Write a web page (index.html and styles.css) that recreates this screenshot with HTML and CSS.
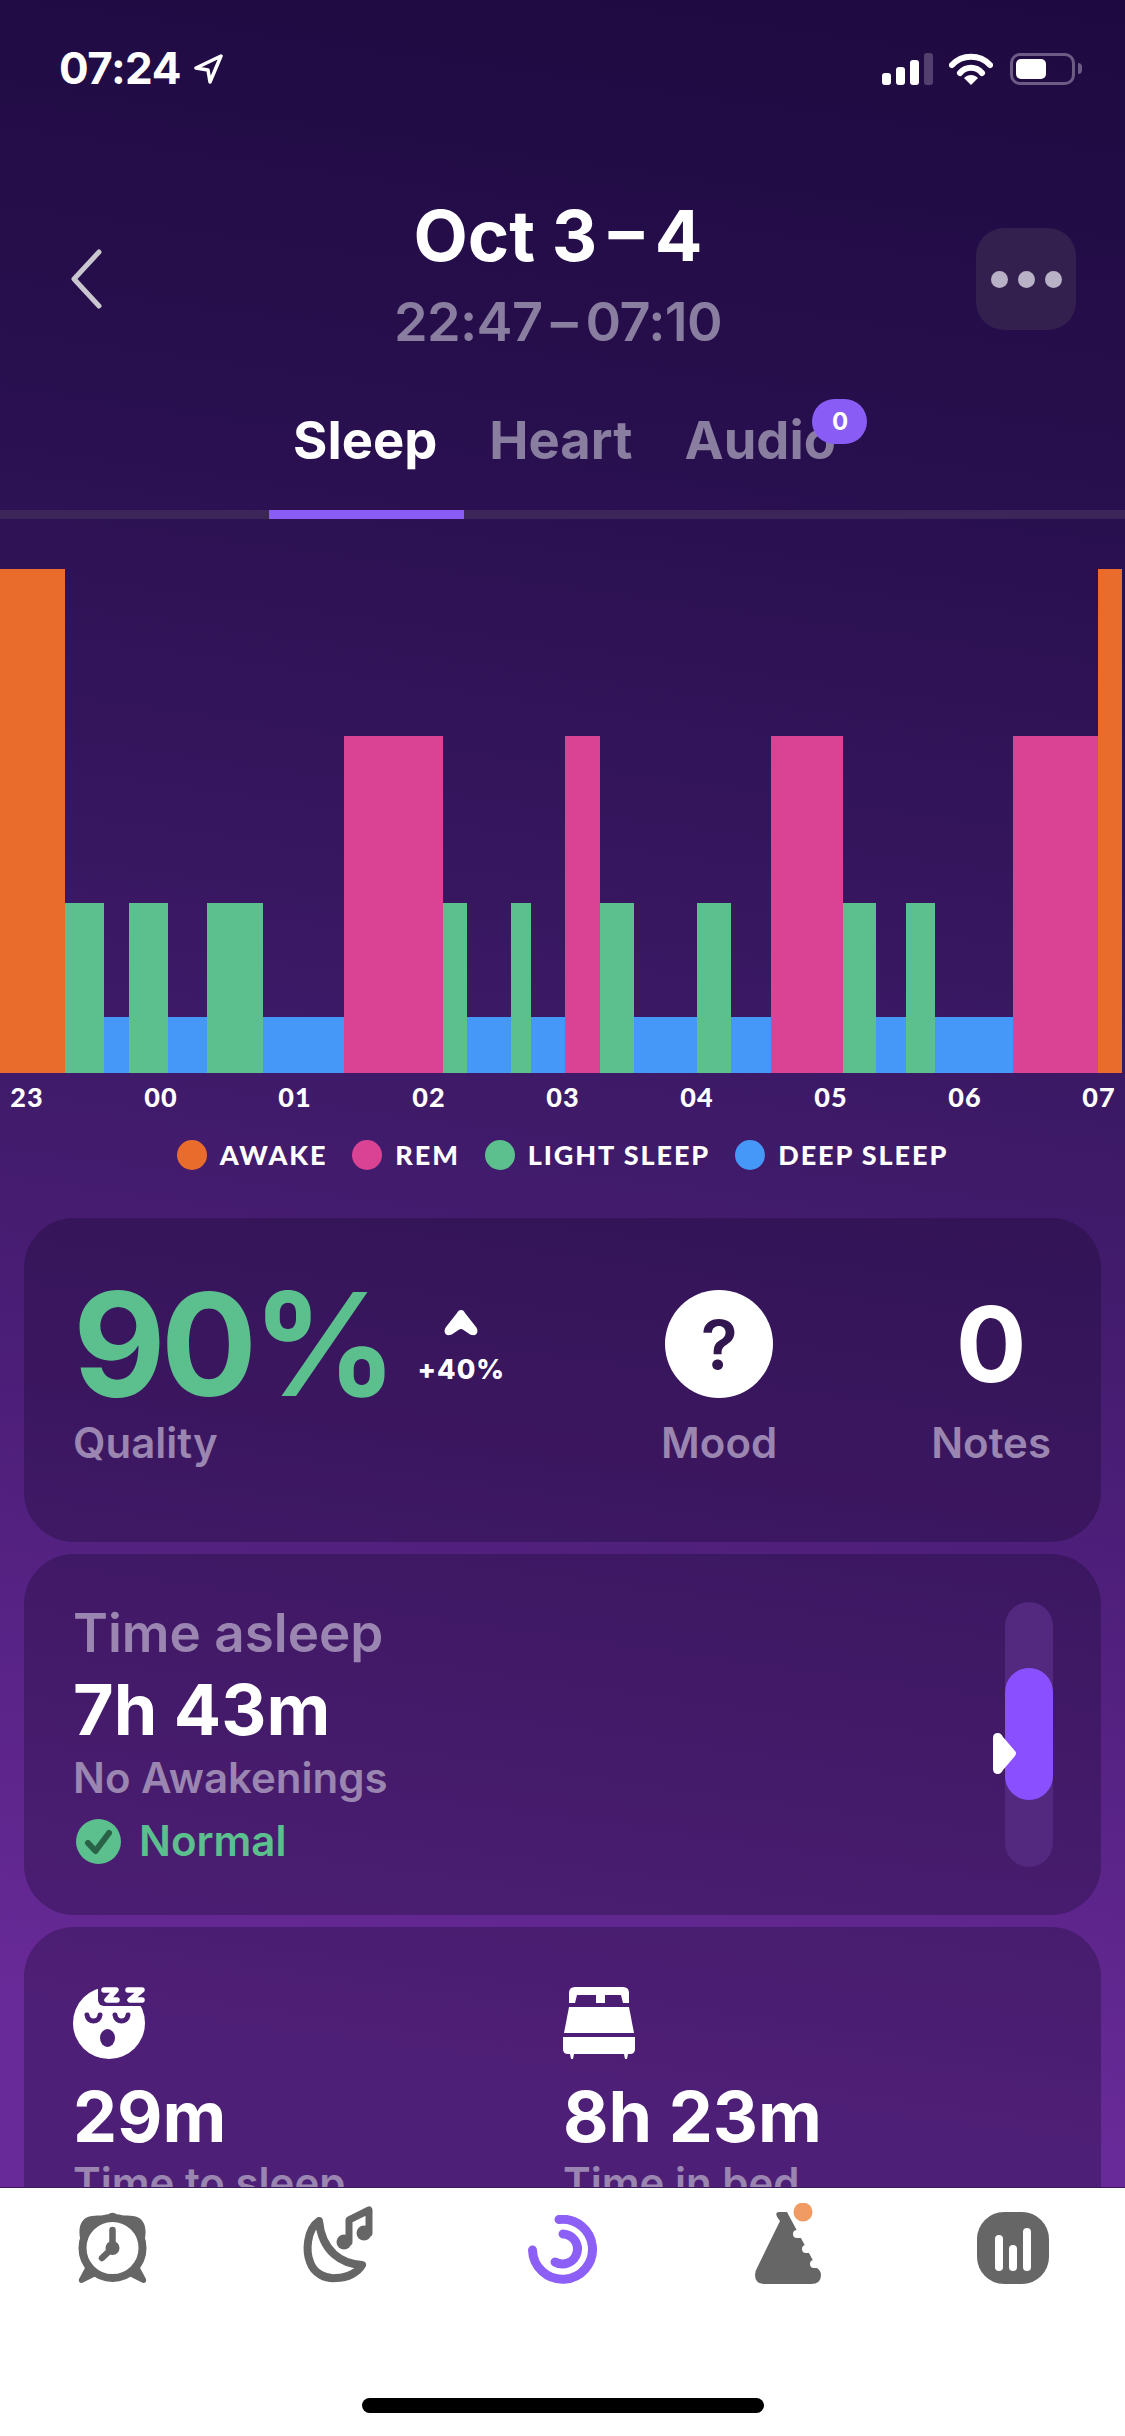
FILE: index.html
```html
<!DOCTYPE html>
<html lang="en">
<head>
    <meta charset="UTF-8">
    <meta name="viewport" content="width=device-width, initial-scale=1.0">
    <title>Sleep report</title>
    <link rel="stylesheet" href="styles.css">
</head>
<body>
    <div class="page">
        <div class="content">
            <div class="status-bar">
                <div class="status-time">
                    <span>07:24</span>
                    <svg class="status-arrow" viewBox="0 0 30 30"><path d="M28 2 L3 14 L15 16 L17 28 Z" fill="none" stroke="#fff" stroke-width="3.5" stroke-linejoin="round"/></svg>
                </div>
                <div class="status-icons">
                    <div class="signal">
                        <span class="signal-bar bar-1"></span>
                        <span class="signal-bar bar-2"></span>
                        <span class="signal-bar bar-3"></span>
                        <span class="signal-bar bar-4"></span>
                    </div>
                    <svg class="wifi" viewBox="0 0 44 32">
                        <path d="M3 12 C13 1 31 1 41 12" fill="none" stroke="#fff" stroke-width="6" stroke-linecap="round"/>
                        <path d="M11 20 C17 13 27 13 33 20" fill="none" stroke="#fff" stroke-width="6" stroke-linecap="round"/>
                        <path d="M15 25 C19 21 25 21 29 25 L22 32 Z" fill="#fff"/>
                    </svg>
                    <div class="battery">
                        <div class="battery-level"></div>
                    </div>
                    <span class="battery-nub"></span>
                </div>
            </div>

            <header class="header">
                <svg class="back" viewBox="0 0 32 60"><path d="M29 3 L4 30 L29 57" fill="none" stroke="#c9c6cf" stroke-width="5" stroke-linecap="round" stroke-linejoin="round"/></svg>
                <div class="titles">
                    <h1>Oct 3&thinsp;–&thinsp;4</h1>
                    <p>22:47&thinsp;–&thinsp;07:10</p>
                </div>
                <div class="menu-button">
                    <span></span><span></span><span></span>
                </div>
            </header>

            <nav class="tabs">
                <span class="tab tab-active">Sleep</span>
                <span class="tab">Heart</span>
                <span class="tab tab-audio">Audio<span class="tab-badge">0</span></span>
            </nav>
            <div class="tab-track"><div class="tab-indicator"></div></div>

            <div class="chart">
                <div class="seg awake" style="width:65px"></div>
                <div class="seg light" style="width:39px"></div>
                <div class="seg deep" style="width:25px"></div>
                <div class="seg light" style="width:39px"></div>
                <div class="seg deep" style="width:39px"></div>
                <div class="seg light" style="width:56px"></div>
                <div class="seg deep" style="width:81px"></div>
                <div class="seg rem" style="width:99px"></div>
                <div class="seg light" style="width:24px"></div>
                <div class="seg deep" style="width:44px"></div>
                <div class="seg light" style="width:20px"></div>
                <div class="seg deep" style="width:34px"></div>
                <div class="seg rem" style="width:35px"></div>
                <div class="seg light" style="width:34px"></div>
                <div class="seg deep" style="width:63px"></div>
                <div class="seg light" style="width:34px"></div>
                <div class="seg deep" style="width:40px"></div>
                <div class="seg rem" style="width:72px"></div>
                <div class="seg light" style="width:33px"></div>
                <div class="seg deep" style="width:30px"></div>
                <div class="seg light" style="width:29px"></div>
                <div class="seg deep" style="width:78px"></div>
                <div class="seg rem" style="width:85px"></div>
                <div class="seg awake" style="width:24px"></div>
            </div>
            <div class="axis">
                <span>23</span><span>00</span><span>01</span><span>02</span><span>03</span><span>04</span><span>05</span><span>06</span><span>07</span>
            </div>
            <div class="legend">
                <div class="legend-item"><span class="dot awake"></span>AWAKE</div>
                <div class="legend-item"><span class="dot rem"></span>REM</div>
                <div class="legend-item"><span class="dot light"></span>LIGHT SLEEP</div>
                <div class="legend-item"><span class="dot deep"></span>DEEP SLEEP</div>
            </div>

            <section class="card card-quality">
                <div class="metric metric-quality">
                    <div class="metric-value">
                        <span class="quality-number">90%</span>
                        <div class="trend">
                            <svg class="trend-arrow" viewBox="0 0 34 27"><path d="M17 1 C19 1 20 2 21 4 L32 18 C35 22 33 27 28 26 C25 26 20 20 17 20 C14 20 9 26 6 26 C1 27 -1 22 2 18 L13 4 C14 2 15 1 17 1 Z" fill="#fff"/></svg>
                            <span>+40%</span>
                        </div>
                    </div>
                    <div class="label">Quality</div>
                </div>
                <div class="metric metric-mood">
                    <div class="metric-value"><span class="mood-circle">?</span></div>
                    <div class="label">Mood</div>
                </div>
                <div class="metric metric-notes">
                    <div class="metric-value"><span class="notes-number">0</span></div>
                    <div class="label">Notes</div>
                </div>
            </section>

            <section class="card card-asleep">
                <div class="asleep-text">
                    <div class="label-large">Time asleep</div>
                    <div class="value">7h 43m</div>
                    <div class="label asleep-note">No Awakenings</div>
                    <div class="normal">
                        <svg class="check" viewBox="0 0 45 45">
                            <circle cx="22.5" cy="22.5" r="22.5" fill="#5bc08e"/>
                            <path d="M12 24 L19.5 32 L33 14" fill="none" stroke="#2a6248" stroke-width="6" stroke-linecap="round" stroke-linejoin="round"/>
                        </svg>
                        Normal
                    </div>
                </div>
                <div class="range">
                    <div class="range-fill"></div>
                    <svg class="range-marker" viewBox="0 0 23 41"><path d="M0 5 Q0 0 5 0 Q8 0 10 4 L22 18 Q24 20 22 23 L10 37 Q8 41 5 41 Q0 41 0 36 Z" fill="#fff"/></svg>
                </div>
            </section>

            <section class="card card-times">
                <div class="time-col">
                    <svg class="time-icon" viewBox="0 0 72 72">
                        <circle cx="36" cy="36" r="36" fill="#fff"/>
                        <rect x="25" y="-4" width="52" height="23" rx="6" fill="#4b1f75"/>
                        <path d="M31 3 H43 L34 13 H44" fill="none" stroke="#fff" stroke-width="5.5" stroke-linecap="round" stroke-linejoin="round"/>
                        <path d="M55 3 H69 L57 13 H69" fill="none" stroke="#fff" stroke-width="5.5" stroke-linecap="round" stroke-linejoin="round"/>
                        <path d="M14 28 C15 36 26 36 27 28" fill="none" stroke="#4b1f75" stroke-width="5" stroke-linecap="round"/>
                        <path d="M42 28 C43 36 54 36 55 28" fill="none" stroke="#4b1f75" stroke-width="5" stroke-linecap="round"/>
                        <ellipse cx="34.5" cy="51" rx="7.5" ry="9" fill="#4b1f75"/>
                    </svg>
                    <div class="value">29m</div>
                    <div class="label">Time to sleep</div>
                </div>
                <div class="time-col">
                    <svg class="time-icon" viewBox="0 0 72 72">
                        <path d="M6 16 V6 Q6 0 12 0 H60 Q66 0 66 6 V16 H60 L58 8 H42 V16 H33 V8 H14 L12 16 Z" fill="#fff"/>
                        <path d="M6 20 H66 L71 46 H1 Z" fill="#fff"/>
                        <path d="M0 50 H72 V62 Q72 67 67 67 H65 L64 72 H62 L61 67 H11 L10 72 H8 L7 67 H5 Q0 67 0 62 Z" fill="#fff"/>
                    </svg>
                    <div class="value">8h 23m</div>
                    <div class="label">Time in bed</div>
                </div>
            </section>
        </div>

        <footer class="tabbar">
            <div class="tabbar-icons">
                <svg class="nav-icon" viewBox="0 0 70 72">
                    <path d="M4 34 C-2 16 3 5 14 4 C22 3 27 4 30 3 C32 0 37 0 39 3 C42 4 47 3 55 4 C66 5 71 16 65 34 Z" fill="#666"/>
                    <path d="M8 54 L1 67 Q0 71 4 71 L18 64 Z M61 54 L68 67 Q69 71 65 71 L51 64 Z" fill="#666"/>
                    <circle cx="34.5" cy="36" r="30" fill="#fff" stroke="#666" stroke-width="8"/>
                    <path d="M34.5 18 V36 L24 46" fill="none" stroke="#666" stroke-width="6.5" stroke-linecap="round" stroke-linejoin="round"/>
                    <circle cx="34.5" cy="36" r="7" fill="#666"/>
                </svg>
                <svg class="nav-icon" viewBox="0 0 72 78">
                    <path d="M17 15 C4 24 4 46 8 56 C12 68 24 73 34 72 C46 72 56 66 60 59 C40 58 20 46 17 15 Z" fill="none" stroke="#666" stroke-width="8" stroke-linejoin="round"/>
                    <path d="M47 36 V14 L67 4 V27" fill="none" stroke="#666" stroke-width="7" stroke-linecap="round" stroke-linejoin="round"/>
                    <circle cx="42" cy="36" r="7.5" fill="#666"/>
                    <circle cx="62" cy="27" r="7.5" fill="#666"/>
                </svg>
                <svg class="nav-icon" viewBox="0 0 69 69">
                    <path d="M31 4.5 A30 30 0 1 1 4.5 35" fill="none" stroke="#8c5ff7" stroke-width="9" stroke-linecap="round"/>
                    <path d="M35 19 A15 15 0 1 1 27 47" fill="none" stroke="#8c5ff7" stroke-width="9" stroke-linecap="round"/>
                </svg>
                <svg class="nav-icon" viewBox="0 0 66 81">
                    <path d="M24 9 H32 L62 65 Q66 68 66 72 Q66 81 56 81 H10 Q0 81 0 72 Q0 68 3 63 L25 18 Q18 9 24 9 Z" fill="#666"/>
                    <path d="M42 31 H54 M51 46 H62 M59 61 H70" stroke="#fff" stroke-width="8" stroke-linecap="round"/>
                    <circle cx="48" cy="9" r="13" fill="#fff"/>
                    <circle cx="48" cy="9" r="9.5" fill="#f09a64"/>
                </svg>
                <svg class="nav-icon" viewBox="0 0 72 72">
                    <rect width="72" height="72" rx="27" fill="#666"/>
                    <rect x="18" y="23" width="8" height="36" rx="4" fill="#fff"/>
                    <rect x="32" y="33" width="8" height="26" rx="4" fill="#fff"/>
                    <rect x="46" y="16" width="8" height="43" rx="4" fill="#fff"/>
                </svg>
            </div>
            <div class="home-indicator"></div>
        </footer>
    </div>
</body>
</html>
```

FILE: styles.css
```css
* {
    box-sizing: border-box;
}
body {
    margin: 0;
    font-family: Inter, "Noto Sans", sans-serif;
    background: #fff;
}
.page {
    width: 1125px;
    height: 2436px;
    display: flex;
    flex-direction: column;
    overflow: hidden;
}
.content {
    height: 2187px;
    overflow: hidden;
    color: #fff;
    background: linear-gradient(188deg, #1e0a40 0%, #280f4e 22%, #3e1a68 50%, #4c1e78 65%, #682a98 92%);
}

/* status bar */
.status-bar {
    height: 100px;
    padding: 42px 43px 0 59px;
    display: flex;
    justify-content: space-between;
}
.status-time {
    display: flex;
    align-items: flex-start;
    gap: 12px;
    font-size: 44px;
    font-weight: 700;
    letter-spacing: -0.5px;
    line-height: 52px;
}
.status-arrow {
    width: 30px;
    height: 30px;
    margin-top: 12px;
}
.status-icons {
    display: flex;
    align-items: flex-start;
    padding-top: 11px;
}
.signal {
    display: flex;
    align-items: flex-end;
    gap: 5px;
    height: 32px;
    margin-right: 16px;
}
.signal-bar {
    width: 9px;
    border-radius: 3px;
    background: #fff;
}
.bar-1 { height: 12px; }
.bar-2 { height: 18px; }
.bar-3 { height: 25px; }
.bar-4 { height: 32px; background: #54406f; }
.wifi {
    width: 44px;
    height: 32px;
    margin-right: 17px;
}
.battery {
    width: 65px;
    height: 32px;
    padding: 3px;
    border: 3px solid #6b5b85;
    border-radius: 10px;
}
.battery-level {
    width: 30px;
    height: 100%;
    border-radius: 5px;
    background: #fff;
}
.battery-nub {
    width: 4px;
    height: 11px;
    margin: 10px 0 0 3px;
    border-radius: 0 4px 4px 0;
    background: #6b5b85;
}

/* header */
.header {
    display: grid;
    grid-template-columns: 32px 1fr 100px;
    align-items: start;
    padding: 94px 49px 0 70px;
}
.back {
    width: 32px;
    height: 60px;
    margin-top: 55px;
}
.titles {
    padding-left: 38px;
    text-align: center;
}
.titles h1 {
    margin: 0;
    font-size: 70.5px;
    font-weight: 700;
    line-height: 84px;
}
.titles p {
    margin: 12px 0 0;
    font-size: 54px;
    font-weight: 600;
    letter-spacing: -0.6px;
    line-height: 64px;
    color: #8a7ea0;
}
.menu-button {
    height: 102px;
    margin-top: 34px;
    display: flex;
    align-items: center;
    justify-content: center;
    gap: 10px;
    border-radius: 28px;
    background: #33204f;
}
.menu-button span {
    width: 17px;
    height: 17px;
    border-radius: 50%;
    background: #b9b1c6;
}

/* tabs */
.tabs {
    display: flex;
    justify-content: center;
    gap: 52px;
    margin-top: 56px;
    padding-left: 4px;
    font-size: 52.5px;
    font-weight: 700;
    line-height: 60px;
    color: #8a7ea0;
}
.tab-active {
    color: #fff;
}
.tab-audio {
    position: relative;
}
.tab-badge {
    position: absolute;
    left: 128px;
    top: -11px;
    width: 55px;
    height: 45px;
    border-radius: 23px;
    background: #8a5cf6;
    color: #fff;
    font-size: 24px;
    font-weight: 700;
    line-height: 45px;
    text-align: center;
}
.tab-track {
    height: 9px;
    margin-top: 40px;
    background: #3c2559;
}
.tab-indicator {
    width: 195px;
    height: 9px;
    margin-left: 269px;
    background: #8a5cf6;
}

/* chart */
.chart {
    display: flex;
    align-items: flex-end;
    height: 504px;
    margin-top: 50px;
}
.seg.awake { height: 504px; }
.seg.rem { height: 337px; }
.seg.light { height: 170px; }
.seg.deep { height: 56px; }
.awake { background: #e96c2d; }
.rem { background: #da4394; }
.light { background: #5bc08e; }
.deep { background: #4598f8; }
.axis {
    display: flex;
    margin: 9px 0 0 -40px;
    font-family: Lato, sans-serif;
    font-size: 27px;
    font-weight: 900;
    letter-spacing: 1px;
    line-height: 30px;
}
.axis span {
    flex: 0 0 134px;
    text-align: center;
}
.legend {
    display: flex;
    justify-content: center;
    gap: 25px;
    margin-top: 28px;
    font-family: Lato, sans-serif;
    font-size: 27px;
    font-weight: 900;
    letter-spacing: 1.9px;
    line-height: 30px;
}
.legend-item {
    display: flex;
    align-items: center;
    gap: 13px;
}
.dot {
    width: 30px;
    height: 30px;
    border-radius: 50%;
}

/* cards */
.card {
    margin: 12px 24px 0;
    border-radius: 50px;
    background: rgba(20, 5, 40, 0.3);
}
.card-quality {
    display: flex;
    height: 324px;
    margin-top: 48px;
    padding: 71px 50px 0 49px;
}
.metric-quality {
    flex: 1;
}
.metric-mood {
    margin-right: 154px;
    text-align: center;
}
.metric-notes {
    text-align: center;
}
.metric-value {
    display: flex;
    align-items: center;
    justify-content: center;
    height: 110px;
    margin-bottom: 20px;
}
.metric-quality .metric-value {
    justify-content: flex-start;
}
.quality-number {
    font-size: 143px;
    font-weight: 700;
    letter-spacing: -5px;
    line-height: 110px;
    color: #5bc08e;
}
.trend {
    display: flex;
    flex-direction: column;
    align-items: center;
    gap: 24px;
    margin-left: 25px;
    font-size: 27px;
    font-weight: 800;
    letter-spacing: 1px;
    line-height: 20px;
}
.trend-arrow {
    width: 34px;
    height: 27px;
}
.mood-circle {
    display: block;
    width: 108px;
    height: 108px;
    border-radius: 50%;
    background: #fff;
    color: #32164f;
    font-size: 68px;
    font-weight: 600;
    line-height: 108px;
    text-align: center;
}
.notes-number {
    font-size: 105px;
    font-weight: 700;
    line-height: 110px;
}
.label {
    font-size: 42px;
    font-weight: 600;
    line-height: 48px;
    color: #9a86b0;
}
.label-large {
    font-size: 53px;
    font-weight: 600;
    line-height: 60px;
    color: #9a86b0;
}
.value {
    font-size: 70px;
    font-weight: 700;
    line-height: 76px;
}
.card-asleep {
    display: flex;
    align-items: center;
    justify-content: space-between;
    height: 361px;
    padding: 0 48px 0 49px;
}
.asleep-text .value {
    margin-top: 9px;
}
.asleep-note {
    margin-top: 5px;
    line-height: 50px;
}
.normal {
    display: flex;
    align-items: center;
    gap: 18px;
    margin-top: 13px;
    font-size: 42px;
    font-weight: 600;
    line-height: 50px;
    color: #5bc08e;
}
.check {
    width: 45px;
    height: 45px;
    margin-left: 3px;
}
.range {
    position: relative;
    width: 48px;
    height: 265px;
    border-radius: 24px;
    background: #52297f;
}
.range-fill {
    position: absolute;
    left: 0;
    top: 66px;
    width: 48px;
    height: 132px;
    border-radius: 24px;
    background: #8a4fff;
}
.range-marker {
    position: absolute;
    left: -12px;
    top: 131px;
    width: 23px;
    height: 41px;
}
.card-times {
    display: grid;
    grid-template-columns: 490px 1fr;
    padding: 60px 49px;
}
.time-icon {
    display: block;
    width: 72px;
    height: 72px;
    margin-bottom: 20px;
}
.time-col .label {
    margin-top: 4px;
}

/* bottom tabs */
.tabbar {
    flex: 1;
    background: #fff;
    border-top: 1px solid #3a1a5c;
}
.tabbar-icons {
    display: grid;
    grid-template-columns: repeat(5, 225px);
    align-items: end;
    justify-items: center;
    height: 96px;
    padding-top: 15px;
}
.nav-icon {
    display: block;
}
.nav-icon:nth-child(1) { width: 70px; height: 72px; }
.nav-icon:nth-child(2) { width: 72px; height: 78px; }
.nav-icon:nth-child(3) { width: 69px; height: 69px; }
.nav-icon:nth-child(4) { width: 66px; height: 81px; }
.nav-icon:nth-child(5) { width: 72px; height: 72px; }
.home-indicator {
    width: 402px;
    height: 15px;
    margin: 114px auto 0;
    border-radius: 8px;
    background: #000;
}
```
